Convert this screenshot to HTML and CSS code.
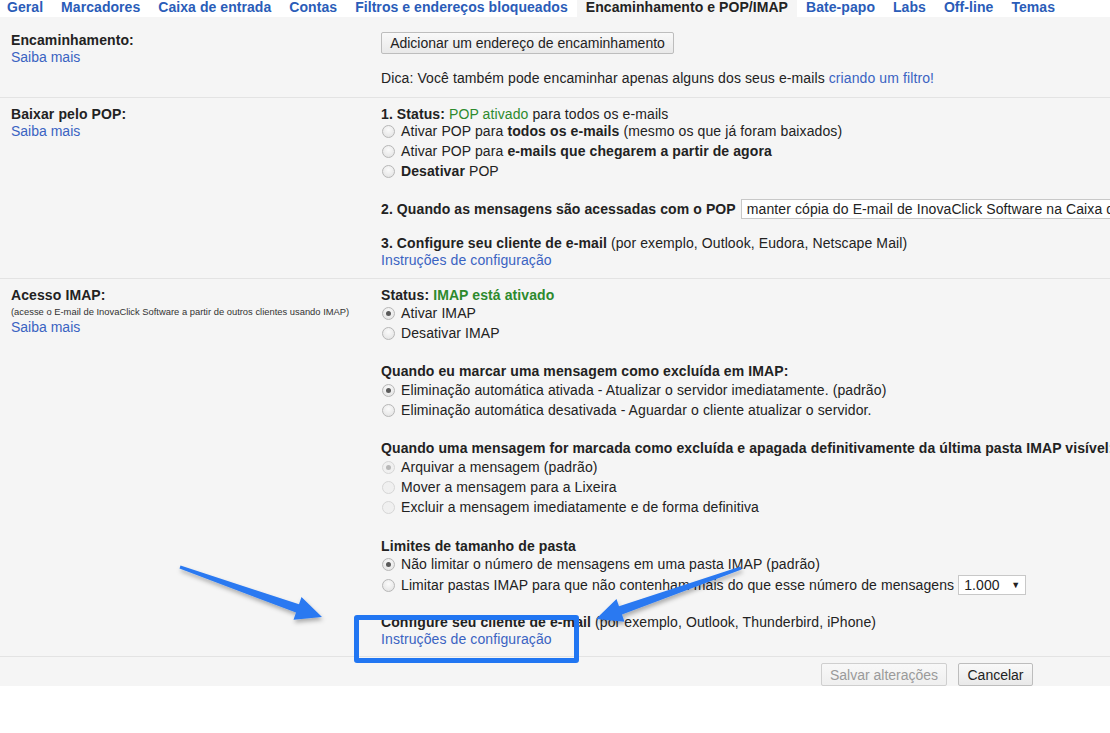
FILE: index.html
```html
<!DOCTYPE html>
<html lang="pt-BR">
<head>
<meta charset="utf-8">
<title>Configurações - Encaminhamento e POP/IMAP</title>
<link rel="stylesheet" href="styles.css">
</head>
<body>
<div class="page">
  <nav class="tabs">
    <a class="tab">Geral</a>
    <a class="tab">Marcadores</a>
    <a class="tab">Caixa de entrada</a>
    <a class="tab">Contas</a>
    <a class="tab">Filtros e endereços bloqueados</a>
    <span class="tab active">Encaminhamento e POP/IMAP</span>
    <a class="tab">Bate-papo</a>
    <a class="tab">Labs</a>
    <a class="tab">Off-line</a>
    <a class="tab">Temas</a>
  </nav>

  <div class="settings">
    <section class="row row-fwd">
      <div class="label">
        <div class="title">Encaminhamento:</div>
        <a class="link">Saiba mais</a>
      </div>
      <div class="value">
        <button class="btn btn-add">Adicionar um endereço de encaminhamento</button>
        <div class="line tip">Dica: Você também pode encaminhar apenas alguns dos seus e-mails <a class="link">criando um filtro!</a></div>
      </div>
    </section>

    <section class="row row-pop">
      <div class="label">
        <div class="title">Baixar pelo POP:</div>
        <a class="link">Saiba mais</a>
      </div>
      <div class="value">
        <div class="line"><b>1. Status:</b> <span class="ok">POP ativado</span> para todos os e-mails</div>
        <div class="radios up2">
          <label class="radio-row"><span class="radio"></span>Ativar POP para&nbsp;<b>todos os e-mails</b>&nbsp;(mesmo os que já foram baixados)</label>
          <label class="radio-row"><span class="radio"></span>Ativar POP para&nbsp;<b>e-mails que chegarem a partir de agora</b></label>
          <label class="radio-row"><span class="radio"></span><b>Desativar</b>&nbsp;POP</label>
        </div>
        <div class="field-row q2"><b>2. Quando as mensagens são acessadas com o POP</b><span class="select wide">manter cópia do E-mail de InovaClick Software na Caixa de entrada</span></div>
        <div class="line q3"><b>3. Configure seu cliente de e-mail</b> (por exemplo, Outlook, Eudora, Netscape Mail)</div>
        <a class="line link block">Instruções de configuração</a>
      </div>
    </section>

    <section class="row row-imap">
      <div class="label">
        <div class="title">Acesso IMAP:</div>
        <div class="small">(acesse o E-mail de InovaClick Software a partir de outros clientes usando IMAP)</div>
        <a class="link">Saiba mais</a>
      </div>
      <div class="value">
        <div class="line"><b>Status: <span class="ok">IMAP está ativado</span></b></div>
        <div class="radios up1">
          <label class="radio-row"><span class="radio on"></span>Ativar IMAP</label>
          <label class="radio-row"><span class="radio"></span>Desativar IMAP</label>
        </div>

        <div class="line head h20"><b>Quando eu marcar uma mensagem como excluída em IMAP:</b></div>
        <div class="radios">
          <label class="radio-row"><span class="radio on"></span>Eliminação automática ativada - Atualizar o servidor imediatamente. (padrão)</label>
          <label class="radio-row"><span class="radio"></span>Eliminação automática desativada - Aguardar o cliente atualizar o servidor.</label>
        </div>

        <div class="line head h20"><b>Quando uma mensagem for marcada como excluída e apagada definitivamente da última pasta IMAP visível:</b></div>
        <div class="radios">
          <label class="radio-row"><span class="radio on dis"></span>Arquivar a mensagem (padrão)</label>
          <label class="radio-row"><span class="radio dis"></span>Mover a mensagem para a Lixeira</label>
          <label class="radio-row"><span class="radio dis"></span>Excluir a mensagem imediatamente e de forma definitiva</label>
        </div>

        <div class="line head h21"><b>Limites de tamanho de pasta</b></div>
        <div class="radios up1">
          <label class="radio-row"><span class="radio on"></span>Não limitar o número de mensagens em uma pasta IMAP (padrão)</label>
          <label class="radio-row tall"><span class="radio"></span>Limitar pastas IMAP para que não contenham mais do que esse número de mensagens<span class="select num">1.000<span class="caret">▼</span></span></label>
        </div>

        <div class="line head h18"><b>Configure seu cliente de e-mail</b> (por exemplo, Outlook, Thunderbird, iPhone)</div>
        <a class="line link block">Instruções de configuração</a>
      </div>
    </section>

    <footer class="actions">
      <button class="btn btn-save" disabled>Salvar alterações</button>
      <button class="btn btn-cancel">Cancelar</button>
    </footer>
  </div>

  <div class="highlight"></div>
  <svg class="arrows" width="1110" height="733" viewBox="0 0 1110 733" aria-hidden="true">
    <defs>
      <filter id="sh" x="-20%" y="-50%" width="140%" height="200%">
        <feDropShadow dx="1" dy="3" stdDeviation="2" flood-color="#000" flood-opacity="0.3"/>
      </filter>
    </defs>
    <polygon filter="url(#sh)" fill="#2a79f1" points="180.5,565.6 299,604.2 301.5,597.1 322,617 293.5,619.7 296,612.6 179.5,568.4"/>
    <polygon filter="url(#sh)" fill="#2a79f1" points="740.5,566.6 619,606.2 616.5,599.1 596,619 624.5,621.7 622,614.6 741.5,569.4"/>
  </svg>
</div>
</body>
</html>
```

FILE: styles.css
```css
html, body {
  margin: 0;
  padding: 0;
  background: #fff;
}
body {
  font-family: "Liberation Sans", Arial, sans-serif;
  font-size: 14px;
  color: #222;
  overflow: hidden;
  width: 1110px;
  height: 733px;
}
.page {
  position: relative;
  width: 1110px;
  height: 733px;
  overflow: hidden;
}

/* tabs */
.tabs {
  display: flex;
  height: 17px;
  white-space: nowrap;
}
.tab {
  font-size: 14px;
  font-weight: bold;
  line-height: 14px;
  letter-spacing: 0.06px;
  padding: 0 9px 3px;
  color: #2a5cb8;
  cursor: pointer;
}
.tab:first-child { padding-left: 7px; }
.tab.active {
  color: #222;
  background: #f5f5f5;
}

/* settings body */
.settings {
  background: #f5f5f5;
  height: 669px;
}
.row {
  display: grid;
  grid-template-columns: 370px 1fr;
  padding-left: 11px;
  border-bottom: 1px solid #e3e3e3;
  white-space: nowrap;
}
.row-fwd { padding-top: 15px; padding-bottom: 10px; }
.row-pop { padding-top: 8px; padding-bottom: 9px; }
.row-imap { padding-top: 8px; padding-bottom: 8px; }

.label { line-height: 17px; }
.title { font-weight: bold; letter-spacing: 0.1px; }
.link { color: #3a63c2; cursor: pointer; }
.block { display: block; }
.small {
  font-size: 9.4px;
  line-height: 15px;
  color: #333;
}

.value { line-height: 17px; min-width: 0; letter-spacing: 0.1px; }
.line { line-height: 17px; }
.ok { color: #2d8a2d; }

.btn {
  font-family: "Liberation Sans", Arial, sans-serif;
  font-size: 14px;
  color: #222;
  height: 22px;
  padding: 0 6px;
  border: 1px solid #bdbdbd;
  border-radius: 2px;
  background: linear-gradient(#f9f9f9, #e9e9e9);
  white-space: nowrap;
}
.btn-add { width: 293px; display: block; }
.tip { margin-top: 16px; }

.radios { display: flex; flex-direction: column; }
.up2 { margin-top: -2px; }
.up1 { margin-top: -1px; }
.radio-row {
  display: flex;
  align-items: center;
  height: 20px;
}
.radio-row.tall { height: 22px; }
.radio {
  box-sizing: border-box;
  width: 13px;
  height: 13px;
  margin: 0 6px 0 1px;
  border-radius: 50%;
  border: 1px solid #b7b7b7;
  background: radial-gradient(circle at 50% 35%, #fbfbfb, #e0e0e0);
  position: relative;
  flex: none;
}
.radio.on::after {
  content: "";
  position: absolute;
  left: 3px;
  top: 3px;
  width: 5px;
  height: 5px;
  border-radius: 50%;
  background: #5a5a5a;
}
.radio.dis { border-color: #d6d6d6; background: #f0f0f0; }
.radio.dis.on::after { background: #b8b8b8; }

.field-row {
  display: flex;
  align-items: center;
  height: 22px;
  margin-top: 17px;
}
.q3 { margin-top: 15px; }

.select {
  display: inline-flex;
  align-items: center;
  box-sizing: border-box;
  height: 20px;
  background: #fff;
  border: 1px solid #c8c8c8;
  padding: 0 5px;
  margin-left: 5px;
  flex: none;
}
.select.wide { width: 460px; }
.select.num {
  width: 68px;
  margin-left: 4px;
  justify-content: space-between;
}
.caret { font-size: 9px; color: #222; }

.head.h20 { margin-top: 20px; }
.head.h21 { margin-top: 21px; }
.head.h18 { margin-top: 18px; }

.actions {
  display: flex;
  justify-content: flex-end;
  gap: 11px;
  padding: 6px 77px 0 0;
}
.btn-save { width: 126px; height: 23px; color: #9a9a9a; background: linear-gradient(#f8f8f8, #efefef); border-color: #cfcfcf; }
.btn-cancel { width: 75px; height: 23px; }

/* annotations */
.highlight {
  position: absolute;
  left: 354px;
  top: 615px;
  width: 215px;
  height: 38px;
  border: 5px solid #2176f2;
  border-radius: 3px;
}
.arrows {
  position: absolute;
  left: 0;
  top: 0;
  pointer-events: none;
}
```
